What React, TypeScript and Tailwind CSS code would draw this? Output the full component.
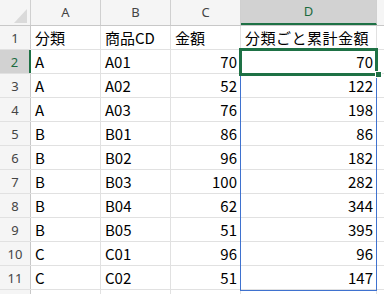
import React from "react";

type Row = { cat: string; code: string; amount: string; cum: string };

const rows: Row[] = [
  { cat: "A", code: "A01", amount: "70", cum: "70" },
  { cat: "A", code: "A02", amount: "52", cum: "122" },
  { cat: "A", code: "A03", amount: "76", cum: "198" },
  { cat: "B", code: "B01", amount: "86", cum: "86" },
  { cat: "B", code: "B02", amount: "96", cum: "182" },
  { cat: "B", code: "B03", amount: "100", cum: "282" },
  { cat: "B", code: "B04", amount: "62", cum: "344" },
  { cat: "B", code: "B05", amount: "51", cum: "395" },
  { cat: "C", code: "C01", amount: "96", cum: "96" },
  { cat: "C", code: "C02", amount: "51", cum: "147" },
];

const cellFont = {
  fontFamily: '"Noto Sans CJK JP", "Noto Sans", sans-serif',
};
const headFont = {
  fontFamily: '"Noto Sans", "Liberation Sans", sans-serif',
};

function ColHead({ label, w, active }: { label: string; w: string; active?: boolean }) {
  return (
    <div
      className={`${w} h-full shrink-0 flex items-center justify-center border-r border-[#d0d0d0] text-[13px] ${
        active
          ? "bg-[#d2d2d2] text-[#1d6b3f] border-b-2 border-b-[#1e7145]"
          : "bg-[#f5f5f5] text-[#444]"
      }`}
      style={headFont}
    >
      {label}
    </div>
  );
}

function RowHead({ n, active }: { n?: number; active?: boolean }) {
  return (
    <div
      className={`w-[31px] h-full shrink-0 flex items-center justify-center border-r text-[13px] pt-[3px] ${
        active
          ? "bg-[#d2d2d2] text-[#1d6b3f] border-r-2 border-r-[#1e7145]"
          : "bg-[#f5f5f5] text-[#444] border-r-[#c8c8c8]"
      }`}
      style={headFont}
    >
      {n}
    </div>
  );
}

function Cell({
  w,
  children,
  right,
}: {
  w: string;
  children?: React.ReactNode;
  right?: boolean;
}) {
  return (
    <div
      className={`${w} h-full shrink-0 flex items-end pb-[1px] border-r border-[#e1e1e1] text-[15px] leading-[20px] text-black whitespace-nowrap ${
        right ? "justify-end pr-[3px]" : "pl-[4px]"
      }`}
      style={cellFont}
    >
      {children}
    </div>
  );
}

export default function App() {
  return (
    <div className="relative w-[384px] h-[294px] overflow-hidden bg-white">
      {/* column headers */}
      <div className="flex h-[26px] border-b border-[#c8c8c8] bg-[#f5f5f5]">
        <div className="relative w-[31px] h-full shrink-0 border-r border-[#d0d0d0] bg-[#f5f5f5]">
          <svg className="absolute left-0 top-0" width="30" height="25" viewBox="0 0 30 25">
            <polygon points="14,23 27,23 27,9" fill="#dadada" />
          </svg>
        </div>
        <ColHead label="A" w="w-[70px]" />
        <ColHead label="B" w="w-[70px]" />
        <ColHead label="C" w="w-[70px]" />
        <ColHead label="D" w="w-[136px]" active />
        <div className="flex-1 h-full bg-[#f5f5f5]" />
      </div>

      {/* header row */}
      <div className="flex h-[24px] border-b border-[#e1e1e1]">
        <RowHead n={1} />
        <Cell w="w-[70px]">分類</Cell>
        <Cell w="w-[70px]">商品CD</Cell>
        <Cell w="w-[70px]">金額</Cell>
        <Cell w="w-[136px]">
          <span className="tracking-[0.5px]">分類ごと累計金額</span>
        </Cell>
        <div className="flex-1" />
      </div>

      {rows.map((r, i) => (
        <div key={i} className="flex h-[24px] border-b border-[#e1e1e1]">
          <RowHead n={i + 2} active={i === 0} />
          <Cell w="w-[70px]">{r.cat}</Cell>
          <Cell w="w-[70px]">{r.code}</Cell>
          <Cell w="w-[70px]" right>
            {r.amount}
          </Cell>
          <Cell w="w-[136px]" right>
            {r.cum}
          </Cell>
          <div className="flex-1" />
        </div>
      ))}
      <div className="flex h-[24px]">
        <RowHead />
        <Cell w="w-[70px]" />
        <Cell w="w-[70px]" />
        <Cell w="w-[70px]" />
        <Cell w="w-[136px]" />
      </div>

      {/* referenced range outline */}
      <div className="absolute left-[240px] top-[49px] w-[137px] h-[242px] border border-[#3f72cf] pointer-events-none" />
      {/* active cell */}
      <div className="absolute left-[239px] top-[48px] w-[139px] h-[28px] border-[3px] border-[#1e7145] pointer-events-none" />
      {/* fill handle */}
      <div className="absolute left-[375px] top-[71px] w-[7px] h-[7px] bg-[#1e7145] border border-white pointer-events-none" />
    </div>
  );
}
